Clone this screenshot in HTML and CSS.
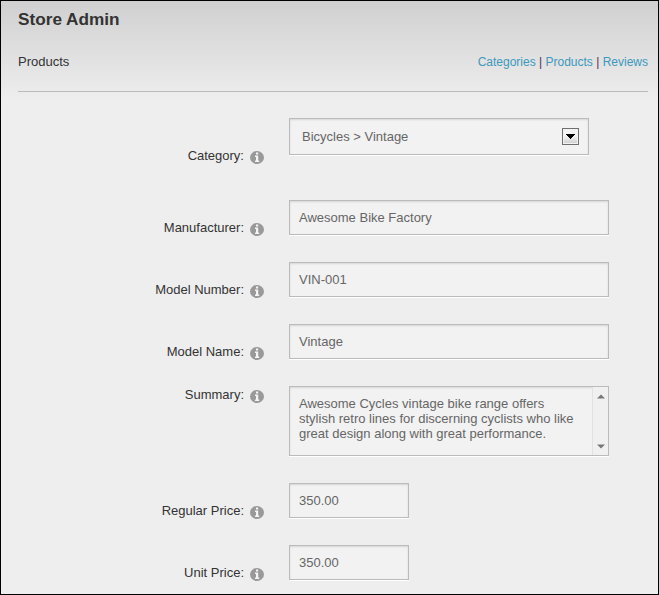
FILE: index.html
```html
<!DOCTYPE html>
<html lang="en">
<head>
<meta charset="utf-8">
<title>Store Admin</title>
<link rel="stylesheet" href="styles.css">
</head>
<body>
<svg class="defs" width="0" height="0" aria-hidden="true">
  <symbol id="info" viewBox="0 0 14 13" preserveAspectRatio="none">
    <ellipse cx="7" cy="6.5" rx="7" ry="6.5" fill="#999"/>
    <path fill="#f4f4f4" d="M6 1.5h2.2v2H6zM5 4.5h3.2V9.5h1V11H5V9.500h1V6H5z"/>
  </symbol>
</svg>
<main class="page">
  <h1 class="title">Store Admin</h1>
  <header class="bar">
    <h2 class="section">Products</h2>
    <nav class="links"><a href="#">Categories</a> | <a href="#">Products</a> | <a href="#">Reviews</a></nav>
  </header>
  <form class="form">
    <div class="row row-category">
      <div class="label">Category: <svg class="info"><use href="#info"/></svg></div>
      <div class="field select"><span>Bicycles &gt; Vintage</span>
        <span class="drop"><svg width="13" height="13" shape-rendering="crispEdges"><path d="M2 4h9v1h-1v1H9v1H8v1H7v1H6V8H5V7H4V6H3V5H2z"/></svg></span>
      </div>
    </div>
    <div class="row">
      <div class="label">Manufacturer: <svg class="info"><use href="#info"/></svg></div>
      <div class="field">Awesome Bike Factory</div>
    </div>
    <div class="row">
      <div class="label">Model Number: <svg class="info"><use href="#info"/></svg></div>
      <div class="field">VIN-001</div>
    </div>
    <div class="row">
      <div class="label">Model Name: <svg class="info"><use href="#info"/></svg></div>
      <div class="field">Vintage</div>
    </div>
    <div class="row row-summary">
      <div class="label">Summary: <svg class="info"><use href="#info"/></svg></div>
      <div class="field area">
        <p class="text">Awesome Cycles vintage bike range offers<br>stylish retro lines for discerning cyclists who like<br>great design along with great performance.</p>
        <div class="scroll">
          <svg width="8" height="5"><path fill="#777" d="M0 4.5L4 .5l4 4z"/></svg>
          <svg width="8" height="5"><path fill="#777" d="M0 .5l4 4 4-4z"/></svg>
        </div>
      </div>
    </div>
    <div class="row">
      <div class="label">Regular Price: <svg class="info"><use href="#info"/></svg></div>
      <div class="field short">350.00</div>
    </div>
    <div class="row">
      <div class="label">Unit Price: <svg class="info"><use href="#info"/></svg></div>
      <div class="field short">350.00</div>
    </div>
  </form>
</main>
</body>
</html>
```

FILE: styles.css
```css
* { box-sizing: border-box; }
body {
  margin: 0;
  font: 13px/15px "Liberation Sans", Arial, sans-serif;
  color: #333;
}
.defs { display: none; }
.page {
  height: 595px;
  overflow: hidden;
  border: 1px solid #000;
  padding: 8px 10px 0 17px;
  background: #eee linear-gradient(#d0d0d0, #eee 100px) no-repeat;
}
.title { margin: 0; font-size: 17.2px; line-height: 20px; }
.bar {
  display: flex;
  justify-content: space-between;
  height: 63px;
  padding-top: 25px;
  border-bottom: 1px solid #bbb;
}
.section { margin: 0; font-size: 13px; font-weight: normal; }
.links { padding-top: 1px; font-size: 12px; color: #503050; }
.links a { color: #3d98bd; text-decoration: none; }
.form { padding-top: 26px; }
.row {
  display: grid;
  grid-template-columns: 246px 320px;
  column-gap: 25px;
  align-items: start;
  height: 35px;
  margin-bottom: 27px;
}
.row-category { height: 37px; margin-bottom: 45px; }
.row-summary { height: 70px; }
.label {
  display: flex;
  justify-content: flex-end;
  gap: 6px;
  padding-top: 20px;
}
.row-category .label { padding-top: 30px; }
.row-summary .label { padding-top: 1px; }
.info { width: 14px; height: 13px; margin-top: 3px; }
.field {
  height: 35px;
  padding: 9px;
  border: 1px solid #bbb;
  background: #f2f2f2;
  color: #666;
  box-shadow: inset 0 1px 2px rgba(0, 0, 0, .12), 0 1px 0 #fff;
}
.select {
  display: flex;
  align-items: center;
  justify-content: space-between;
  width: 300px;
  height: 37px;
  padding: 0 9px 0 12px;
}
.drop {
  display: flex;
  width: 17px;
  height: 17px;
  border: 1px solid #707070;
  padding: 1px;
  background: linear-gradient(#f4f4f4 45%, #d2d2d2) content-box #fff;
}
.area { display: flex; justify-content: space-between; height: 70px; padding: 0; }
.text { margin: 9px 0 0 9px; white-space: nowrap; }
.scroll {
  display: flex;
  flex-direction: column;
  align-items: center;
  justify-content: space-between;
  width: 16px;
  padding: 7px 0 6px;
  border-left: 1px solid #e2e2e2;
  background: #f0f0f0;
}
.short { width: 120px; }
```
